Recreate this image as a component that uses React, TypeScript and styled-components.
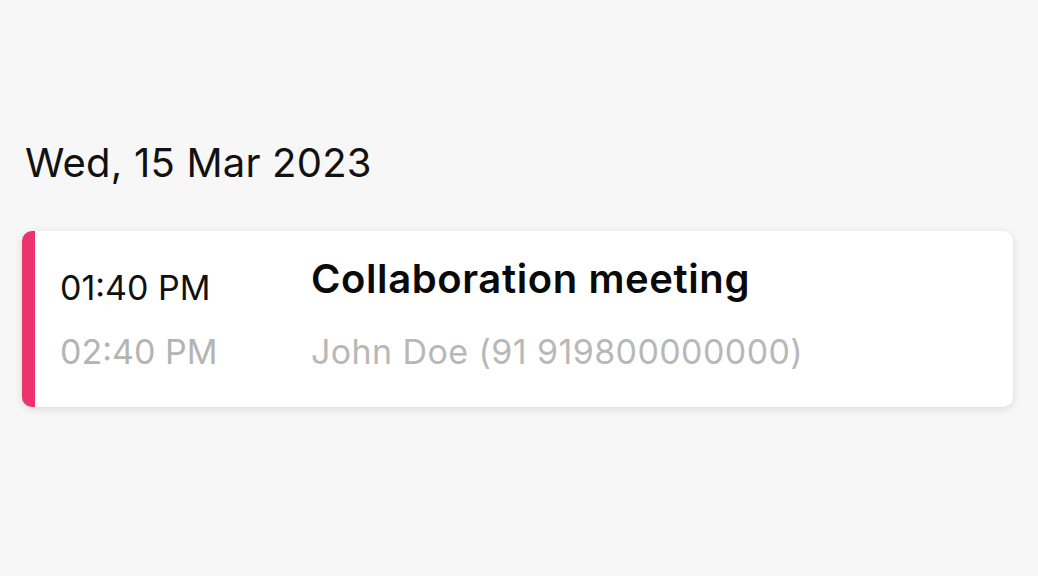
import React from "react";
import styled, { createGlobalStyle } from "styled-components";

const GlobalStyle = createGlobalStyle`
  html, body {
    margin: 0;
    padding: 0;
    background: #f7f7f7;
  }
  body {
    font-family: Inter, "Noto Sans", "Liberation Sans", sans-serif;
    -webkit-font-smoothing: antialiased;
  }
`;

const Page = styled.div`
  min-height: 576px;
  padding: 139px 25px 0 22px;
  box-sizing: border-box;
`;

const DateHeading = styled.h2`
  margin: 0 0 0 3px;
  font-size: 40px;
  line-height: 48px;
  font-weight: 400;
  letter-spacing: 0.2px;
  color: #111;
`;

const EventCard = styled.div<{ $accent: string }>`
  display: flex;
  margin-top: 44px;
  height: 176px;
  box-sizing: border-box;
  padding: 24px 0 0 25px;
  background: #fff;
  border-left: 13px solid ${(p) => p.$accent};
  border-radius: 10px;
  box-shadow: 0 2px 8px rgba(0, 0, 0, 0.12);
`;

const TimeColumn = styled.div`
  display: flex;
  flex-direction: column;
  gap: 24px;
  width: 251px;
  padding-top: 13px;
`;

const Time = styled.span<{ $muted?: boolean }>`
  font-size: 34px;
  line-height: 40px;
  color: ${(p) => (p.$muted ? "#b4b4b4" : "#111")};
`;

const Details = styled.div`
  display: flex;
  flex-direction: column;
  gap: 29px;
`;

const Title = styled.span`
  font-size: 40px;
  line-height: 48px;
  font-weight: 600;
  letter-spacing: 0.6px;
  color: #0a0a0a;
`;

const Contact = styled.span`
  font-size: 34px;
  line-height: 40px;
  letter-spacing: 0.4px;
  color: #b8b8b8;
`;

const App: React.FC = () => {
  return (
    <Page>
      <GlobalStyle />
      <DateHeading>Wed, 15 Mar 2023</DateHeading>
      <EventCard $accent="#ec3370">
        <TimeColumn>
          <Time>01:40 PM</Time>
          <Time $muted>02:40 PM</Time>
        </TimeColumn>
        <Details>
          <Title>Collaboration meeting</Title>
          <Contact>John Doe (91 919800000000)</Contact>
        </Details>
      </EventCard>
    </Page>
  );
};

export default App;
